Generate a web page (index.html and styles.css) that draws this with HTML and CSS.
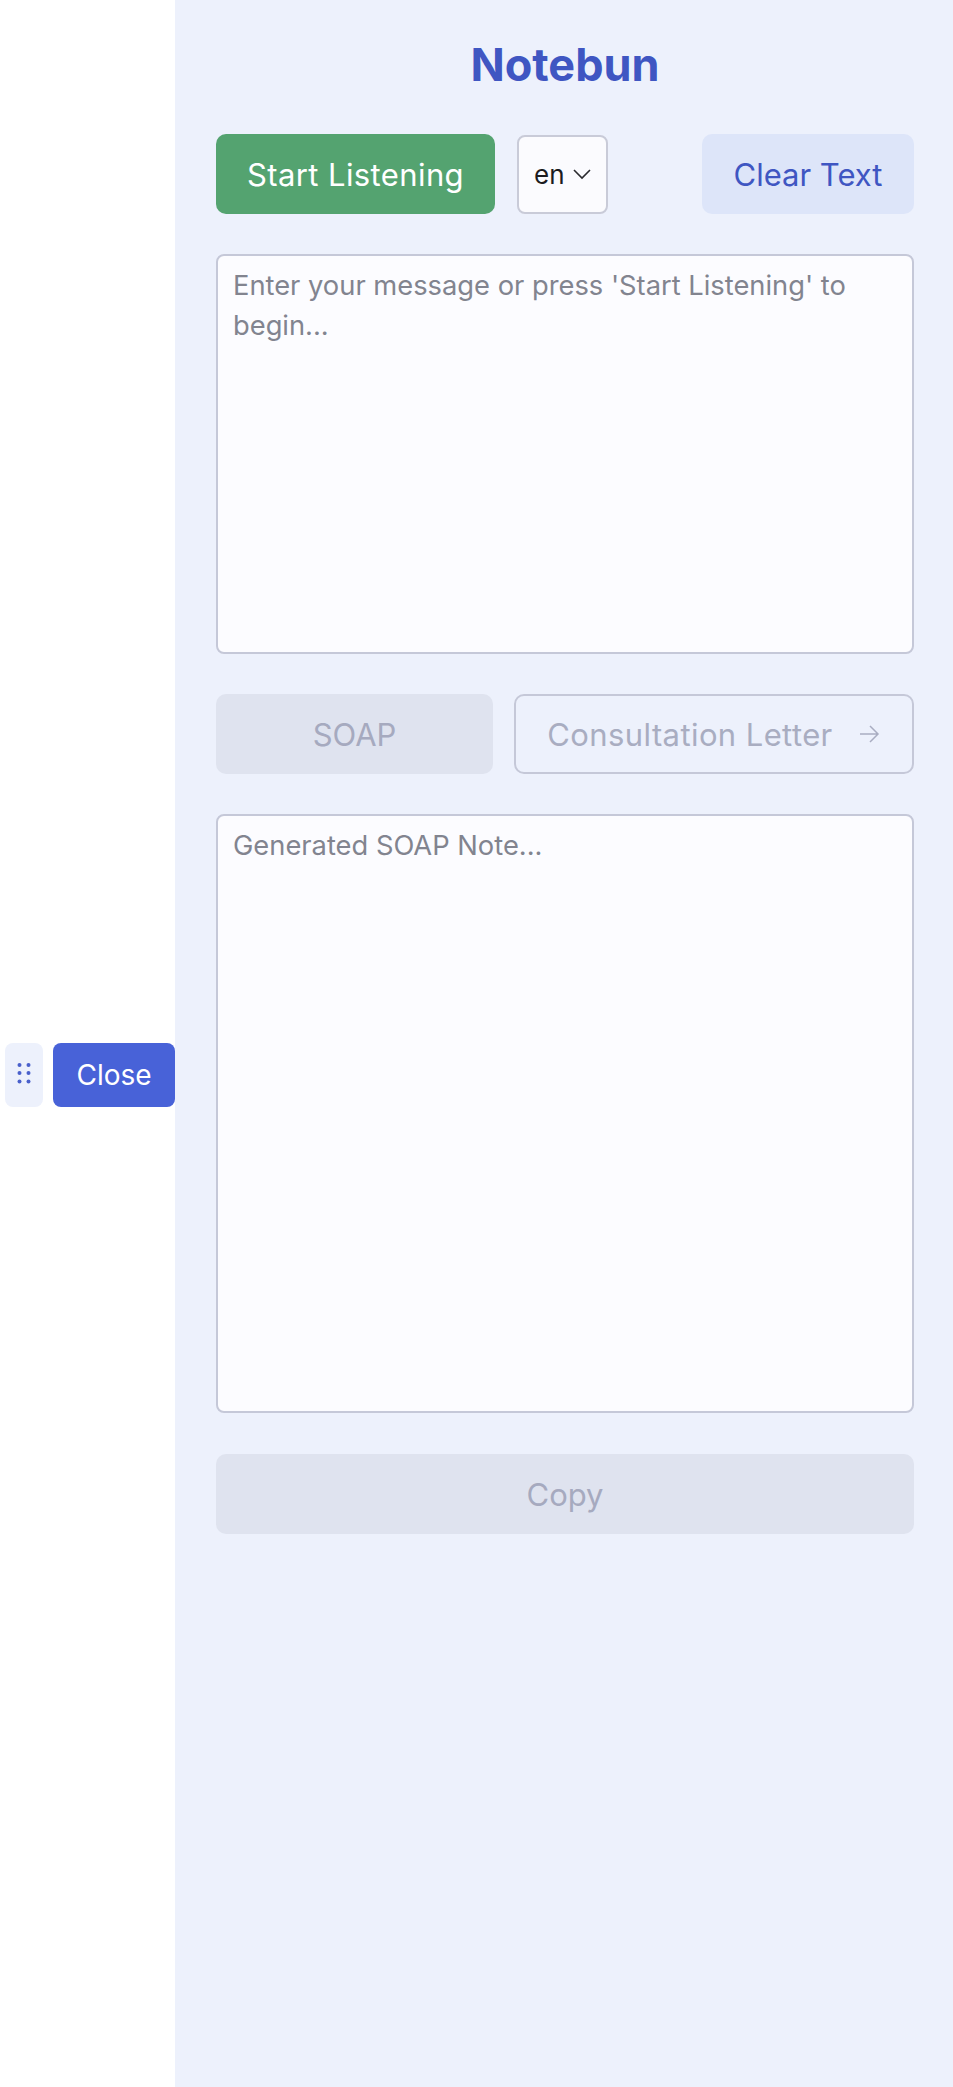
FILE: index.html
```html
<!DOCTYPE html>
<html lang="en">
<head>
	<meta charset="UTF-8">
	<title>Notebun</title>
	<link rel="stylesheet" href="styles.css">
</head>
<body>
	<div id="toggle">
		<span class="handle">
			<svg width="14" height="26" viewBox="0 0 14 26">
				<circle cx="2.5" cy="3" r="2" />
				<circle cx="11.5" cy="3" r="2" />
				<circle cx="2.5" cy="11" r="2" />
				<circle cx="11.5" cy="11" r="2" />
				<circle cx="2.5" cy="19.5" r="2" />
				<circle cx="11.5" cy="19.5" r="2" />
			</svg>
		</span>
		<button class="close">Close</button>
	</div>

	<div id="panel">
		<h1 class="title">Notebun</h1>

		<div class="toolbar">
			<button class="btn btn-start">Start Listening</button>
			<div class="lang">
				<span>en</span>
				<svg width="20" height="12" viewBox="0 0 20 12"><path d="M2 2l8 8 8-8" /></svg>
			</div>
			<button class="btn btn-clear">Clear Text</button>
		</div>

		<textarea class="box box-input" placeholder="Enter your message or press 'Start Listening' to begin..."></textarea>

		<div class="modes">
			<button class="btn btn-soap" disabled>SOAP</button>
			<button class="btn btn-letter" disabled>
				<span>Consultation Letter</span>
				<svg width="24" height="24" viewBox="0 0 24 24"><path d="M3 12h18M13 4l8 8-8 8" /></svg>
			</button>
		</div>

		<textarea class="box box-output" placeholder="Generated SOAP Note..." readonly></textarea>

		<button class="btn btn-copy" disabled>Copy</button>
	</div>
</body>
</html>
```

FILE: styles.css
```css
*{
	margin: 0;
	padding: 0;
	box-sizing: border-box;
}
html, body{
	height: 100%;
}
body{
	background: #fff;
	font-family: Inter, "Noto Sans", "Liberation Sans", sans-serif;
	display: flex;
	justify-content: flex-end;
}
button{
	font-family: inherit;
	border: none;
	cursor: pointer;
}

/* floating close handle */
#toggle{
	position: fixed;
	left: 5px;
	top: calc(50% - 1px);
	display: flex;
	gap: 10px;
}
#toggle .handle{
	width: 38px;
	height: 64px;
	border-radius: 8px;
	background: #edf1fc;
	display: flex;
	align-items: center;
	justify-content: center;
}
#toggle .handle svg{
	fill: #4a60cb;
}
#toggle .close{
	width: 122px;
	height: 64px;
	border-radius: 8px;
	background: #4862d8;
	color: #fff;
	font-size: 28px;
}

/* side panel */
#panel{
	width: 778px;
	height: 100%;
	background: #edf1fc;
	padding: 38px 39px 0 41px;
	display: flex;
	flex-direction: column;
}
.title{
	font-size: 45px;
	line-height: 54px;
	font-weight: 700;
	color: #3f56c2;
	text-align: center;
	margin-bottom: 42px;
}
.toolbar{
	display: flex;
	align-items: center;
	margin-bottom: 40px;
}
.btn{
	height: 80px;
	border-radius: 10px;
	font-size: 31px;
	padding: 0 24px;
}
.btn-start{
	background: #54a370;
	color: #fff;
	width: 279px;
	letter-spacing: 0.4px;
}
.lang{
	width: 91px;
	height: 79px;
	margin-left: 22px;
	border: 2px solid #c9cbd8;
	border-radius: 8px;
	background: #fbfbfe;
	display: flex;
	align-items: center;
	justify-content: space-between;
	padding: 0 14px 0 15px;
	font-size: 26px;
	color: #1c1c1f;
}
.lang svg{
	fill: none;
	stroke: #2a2a2e;
	stroke-width: 1.6;
}
.btn-clear{
	margin-left: auto;
	width: 212px;
	background: #dde5f9;
	color: #3f56c2;
}

.box{
	display: block;
	width: 100%;
	border: 2px solid #c5c8d8;
	border-radius: 8px;
	background: #fcfcff;
	padding: 10px 15px;
	font-family: inherit;
	font-size: 27.3px;
	line-height: 40px;
	color: #222;
	resize: none;
	outline: none;
}
.box::placeholder{
	color: #82848f;
}
.box-input{
	height: 400px;
	margin-bottom: 40px;
}
.box-output{
	height: 599px;
	margin-bottom: 41px;
}

.modes{
	display: flex;
	gap: 21px;
	margin-bottom: 40px;
}
.btn-soap{
	width: 277px;
	background: #dfe3ef;
	color: #a6aabf;
}
.btn-letter{
	flex: 1;
	background: transparent;
	border: 2px solid #c5c8d8;
	color: #a9adc1;
	display: flex;
	align-items: center;
	justify-content: center;
	gap: 24px;
	letter-spacing: 0.4px;
}
.btn-letter svg{
	fill: none;
	stroke: #a9adc1;
	stroke-width: 1.5;
}
.btn-copy{
	width: 100%;
	background: #dfe3ef;
	color: #a6aabf;
}
```
